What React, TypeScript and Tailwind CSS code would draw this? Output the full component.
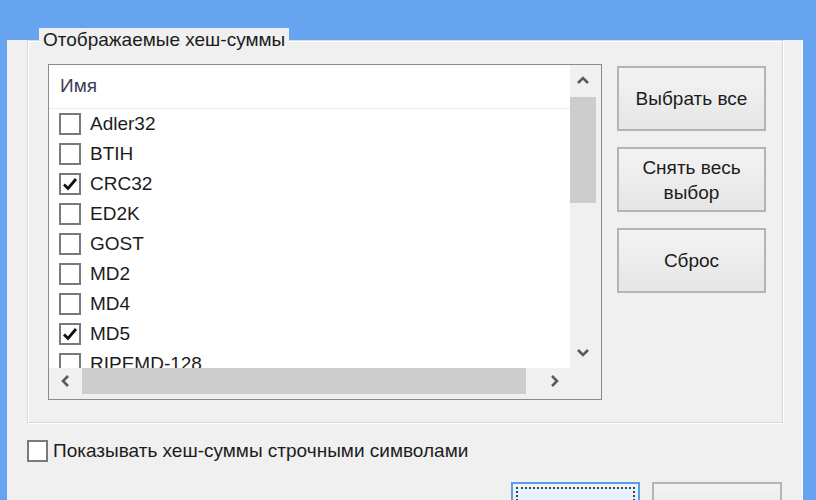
import React from "react";

const hashes = [
  { name: "Adler32", checked: false },
  { name: "BTIH", checked: false },
  { name: "CRC32", checked: true },
  { name: "ED2K", checked: false },
  { name: "GOST", checked: false },
  { name: "MD2", checked: false },
  { name: "MD4", checked: false },
  { name: "MD5", checked: true },
  { name: "RIPEMD-128", checked: false },
];

const font = "font-['Liberation_Sans',Arial,sans-serif]";

function Check({ checked }: { checked: boolean }) {
  return (
    <div className="flex h-[22px] w-[22px] shrink-0 items-center justify-center border-2 border-[#7a7a7a] bg-white">
      {checked && (
        <svg width="16" height="14" viewBox="0 0 16 14">
          <path d="M2 7.5 L6 11.5 L14 2" fill="none" stroke="#111" strokeWidth="2.8" />
        </svg>
      )}
    </div>
  );
}

function Chevron({ dir }: { dir: "up" | "down" | "left" | "right" }) {
  const pts = {
    up: "2,9 7,4 12,9",
    down: "2,4 7,9 12,4",
    left: "9,2 4,7 9,12",
    right: "5,2 10,7 5,12",
  }[dir];
  return (
    <svg width="14" height="14" viewBox="0 0 14 14">
      <polyline points={pts} fill="none" stroke="#5a5a5a" strokeWidth="2.6" />
    </svg>
  );
}

function Btn({ children }: { children: React.ReactNode }) {
  return (
    <div className="flex h-[65px] items-center justify-center border-2 border-[#b4b4b4] bg-gradient-to-b from-[#f3f3f3] to-[#e6e6e6] text-center leading-[25px] text-[#1c1c1c]">
      {children}
    </div>
  );
}

export default function App() {
  return (
    <div className={`h-[500px] w-[816px] overflow-hidden bg-[#66a4ef] pl-[7px] pr-[13px] pt-[7px] text-[19px] ${font}`}>
      <div className="h-full border-r border-white bg-[#f0f0f0]">
        {/* group box */}
        <div className="relative ml-[20px] mt-[33px] h-[383px] w-[756px] border border-[#d8d8d8] shadow-[inset_1px_1px_0_#fff,1px_1px_0_#fff]">
          <span className="absolute -top-[13px] left-[11px] bg-[#f0f0f0] px-[4px] leading-[24px] text-[#1c1c1c]">
            Отображаемые хеш-суммы
          </span>
          <div className="flex gap-[15px] pl-[20px] pt-[23px]">
            {/* list box */}
            <div className="grid h-[336px] w-[554px] grid-cols-[521px_31px] grid-rows-[303px_31px] border border-[#8b8b8b] bg-white">
              <div className="flex flex-col overflow-hidden">
                <div className="flex h-[44px] shrink-0 items-center border-b border-[#ececec] pl-[11px] text-[#3a4058]">
                  Имя
                </div>
                <div className="overflow-hidden">
                  {hashes.map((h) => (
                    <div key={h.name} className="flex h-[30px] items-center pl-[10px] text-[#1c1c1c]">
                      <Check checked={h.checked} />
                      <span className="ml-[9px]">{h.name}</span>
                    </div>
                  ))}
                </div>
              </div>
              {/* vertical scrollbar */}
              <div className="flex flex-col bg-[#f0f0f0]">
                <div className="flex h-[32px] items-center justify-center pr-[5px]">
                  <Chevron dir="up" />
                </div>
                <div className="h-[106px] w-[26px] bg-[#cdcdcd]" />
                <div className="flex-1" />
                <div className="flex h-[31px] items-center justify-center pr-[5px]">
                  <Chevron dir="down" />
                </div>
              </div>
              {/* horizontal scrollbar */}
              <div className="flex bg-[#f0f0f0]">
                <div className="flex h-[26px] w-[33px] items-center justify-center">
                  <Chevron dir="left" />
                </div>
                <div className="h-[26px] w-[444px] bg-[#cdcdcd]" />
                <div className="flex-1" />
                <div className="flex h-[26px] w-[33px] items-center justify-center">
                  <Chevron dir="right" />
                </div>
              </div>
              <div className="bg-[#f0f0f0]" />
            </div>
            {/* side buttons */}
            <div className="mt-[2px] flex w-[149px] flex-col gap-[16px]">
              <Btn>Выбрать все</Btn>
              <Btn>
                Снять весь
                <br />
                выбор
              </Btn>
              <Btn>Сброс</Btn>
            </div>
          </div>
        </div>

        {/* lowercase option */}
        <div className="ml-[20px] mt-[17px] flex items-center text-[#1c1c1c]">
          <div className="h-[22px] w-[21px] border-2 border-[#7a7a7a] bg-white" />
          <span className="ml-[5px] leading-[22px]">Показывать хеш-суммы строчными символами</span>
        </div>

        {/* dialog buttons */}
        <div className="mr-[20px] mt-[20px] flex justify-end gap-[12px]">
          <div className="h-[40px] w-[129px] border-2 border-[#5d9ee3] bg-gradient-to-b from-[#ecf4fc] to-[#dcecfc] p-[3px]">
            <div className="h-full border-2 border-dotted border-[#444]" />
          </div>
          <div className="h-[40px] w-[130px] border-2 border-[#b4b4b4] bg-gradient-to-b from-[#f3f3f3] to-[#e6e6e6]" />
        </div>
      </div>
    </div>
  );
}
